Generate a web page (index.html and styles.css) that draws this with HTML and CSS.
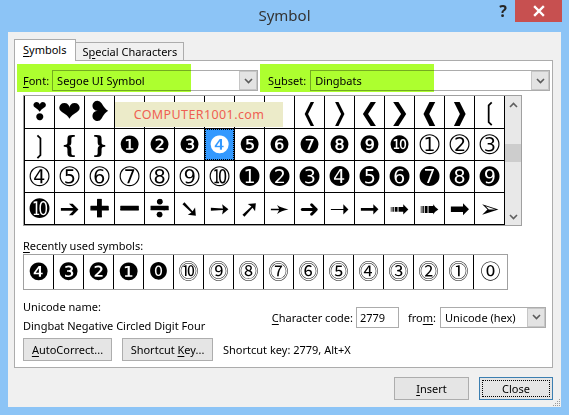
FILE: index.html
```html
<!DOCTYPE html>
<html>
<head>
<meta charset="utf-8">
<title>Symbol</title>
<link rel="stylesheet" href="styles.css">
</head>
<body>
<div class="window">
  <div class="titlebar">
    <div class="tb-left"></div>
    <div class="title">Symbol</div>
    <div class="controls">
      <span class="help">?</span>
      <span class="close"><svg width="12" height="12" viewBox="0 0 12 12"><path d="M2 2 L10 10 M10 2 L2 10" stroke="#fff" stroke-width="2.4" stroke-linecap="square"/></svg></span>
    </div>
  </div>
  <div class="client">
    <div class="tabs">
      <div class="tab active"><span><u>S</u>ymbols</span></div>
      <div class="tab"><span>S<u>p</u>ecial Characters</span></div>
    </div>
    <div class="panel">
      <div class="fontrow">
        <div class="field">
          <span class="lbl"><u>F</u>ont:</span>
          <div class="combo font-combo"><span class="val">Segoe UI Symbol</span><span class="drop"><svg width="9" height="6" viewBox="0 0 9 6"><path d="M1 1 L4.5 4.5 L8 1" fill="none" stroke="#5a5a5a" stroke-width="1.6"/></svg></span></div>
        </div>
        <div class="field subset-field">
          <span class="lbl">S<u>u</u>bset:</span>
          <div class="combo subset-combo"><span class="val">Dingbats</span><span class="drop"><svg width="9" height="6" viewBox="0 0 9 6"><path d="M1 1 L4.5 4.5 L8 1" fill="none" stroke="#5a5a5a" stroke-width="1.6"/></svg></span></div>
        </div>
        <div class="hl hl-font"></div>
        <div class="hl hl-subset"></div>
      </div>

      <div class="charmap">
        <div class="cells">
          <div class="c">❣</div><div class="c big">❤</div><div class="c big">❥</div><div class="c"></div><div class="c"></div><div class="c"></div><div class="c"></div><div class="c"></div><div class="c"></div><div class="c">❬</div><div class="c">❭</div><div class="c">❮</div><div class="c">❯</div><div class="c">❰</div><div class="c">❱</div><div class="c">❲</div>
          <div class="c">❳</div><div class="c">❴</div><div class="c">❵</div><div class="c">❶</div><div class="c">❷</div><div class="c">❸</div><div class="c sel">❹</div><div class="c">❺</div><div class="c">❻</div><div class="c">❼</div><div class="c">❽</div><div class="c">❾</div><div class="c">❿</div><div class="c">➀</div><div class="c">➁</div><div class="c">➂</div>
          <div class="c">➃</div><div class="c">➄</div><div class="c">➅</div><div class="c">➆</div><div class="c">➇</div><div class="c">➈</div><div class="c">➉</div><div class="c">➊</div><div class="c">➋</div><div class="c">➌</div><div class="c">➍</div><div class="c">➎</div><div class="c">➏</div><div class="c">➐</div><div class="c">➑</div><div class="c">➒</div>
          <div class="c">➓</div><div class="c">➔</div><div class="c"><span class="emo">➕</span></div><div class="c"><span class="emo">➖</span></div><div class="c"><span class="emo">➗</span></div><div class="c">➘</div><div class="c">➙</div><div class="c">➚</div><div class="c">➛</div><div class="c">➜</div><div class="c">➝</div><div class="c">➞</div><div class="c">➟</div><div class="c">➠</div><div class="c">➡</div><div class="c">➢</div>
        </div>
        <div class="vscroll">
          <svg class="arr" width="9" height="6" viewBox="0 0 9 6"><path d="M1 5 L4.5 1.5 L8 5" fill="none" stroke="#606060" stroke-width="1.6"/></svg>
          <div class="track"><div class="thumb"></div></div>
          <svg class="arr" width="9" height="6" viewBox="0 0 9 6"><path d="M1 1 L4.5 4.5 L8 1" fill="none" stroke="#606060" stroke-width="1.6"/></svg>
        </div>
        <div class="watermark">COMPUTER1001.com</div>
      </div>

      <div class="recent-label"><u>R</u>ecently used symbols:</div>
      <div class="recent">
        <div class="r neg">❹</div><div class="r neg">❸</div><div class="r neg">❷</div><div class="r neg">❶</div><div class="r zero">⓿</div><div class="r">⓾</div><div class="r">⓽</div><div class="r">⓼</div><div class="r">⓻</div><div class="r">⓺</div><div class="r">⓹</div><div class="r">⓸</div><div class="r">⓷</div><div class="r">⓶</div><div class="r">⓵</div><div class="r last">⓪</div>
      </div>

      <div class="info">
        <div class="names">
          <div class="line">Unicode name:</div>
          <div class="line">Dingbat Negative Circled Digit Four</div>
        </div>
        <div class="codegroup">
          <span class="lbl"><u>C</u>haracter code:</span>
          <div class="input">2779</div>
          <span class="lbl from">fro<u>m</u>:</span>
          <div class="combo from-combo"><span class="val">Unicode (hex)</span><span class="drop"><svg width="9" height="6" viewBox="0 0 9 6"><path d="M1 1 L4.5 4.5 L8 1" fill="none" stroke="#5a5a5a" stroke-width="1.6"/></svg></span></div>
        </div>
      </div>

      <div class="btnrow">
        <div class="btn autocorrect"><span><u>A</u>utoCorrect...</span></div>
        <div class="btn shortcut"><span>Shortcut <u>K</u>ey...</span></div>
        <span class="shortcut-text">Shortcut key: 2779, Alt+X</span>
      </div>
    </div>

    <div class="dlgbuttons">
      <div class="btn insert"><span><u>I</u>nsert</span></div>
      <div class="btn closebtn"><span class="focus">Close</span></div>
    </div>
  </div>
  <svg class="grip" width="9" height="9" viewBox="0 0 9 9"><g fill="#9a9a9a"><rect x="7" y="1" width="1" height="1"/><rect x="5" y="3" width="1" height="1"/><rect x="7" y="3" width="1" height="1"/><rect x="3" y="5" width="1" height="1"/><rect x="5" y="5" width="1" height="1"/><rect x="7" y="5" width="1" height="1"/><rect x="1" y="7" width="1" height="1"/><rect x="3" y="7" width="1" height="1"/><rect x="5" y="7" width="1" height="1"/><rect x="7" y="7" width="1" height="1"/></g></svg>
</div>
</body>
</html>
```

FILE: styles.css
```css
* { box-sizing: border-box; }
html, body { margin: 0; padding: 0; }
body {
  width: 569px;
  height: 415px;
  overflow: hidden;
  background: #8cc4f6;
  font-family: "Noto Sans", "DejaVu Sans", sans-serif;
  font-size: 11px;
  color: #000;
}
u { text-decoration: underline; text-underline-offset: 2px; }

.window {
  position: relative;
  width: 569px;
  height: 415px;
  display: flex;
  flex-direction: column;
  background: #8cc4f6;
}

/* Title bar */
.titlebar {
  height: 32px;
  flex: none;
  display: grid;
  grid-template-columns: 1fr auto 1fr;
}
.title {
  font-size: 15px;
  color: #333;
  padding-top: 5px;
}
.controls {
  display: flex;
  justify-content: flex-end;
  align-items: flex-start;
  padding-right: 7px;
}
.help {
  font-size: 16px;
  font-weight: bold;
  color: #262626;
  line-height: 20px;
  margin-right: 8px;
  margin-top: 1px;
}
.close {
  width: 47px;
  height: 22px;
  background: #c75050;
  display: flex;
  align-items: center;
  justify-content: center;
}

/* Client area */
.client {
  flex: 1;
  margin: 0 8px 8px 8px;
  background: #f0f0f0;
  padding: 7px 8px 0 6px;
  display: flex;
  flex-direction: column;
}

.tabs {
  display: flex;
  align-items: flex-end;
  margin-bottom: -1px;
  height: 22px;
}
.tab {
  height: 19px;
  padding: 0 6px;
  border: 1px solid #acacac;
  background: #f0f0f0;
  line-height: 17px;
  margin-left: -1px;
}
.tab.active {
  position: relative;
  z-index: 1;
  height: 22px;
  padding: 0 9px 0 8px;
  margin-left: 0;
  background: #fff;
  border-bottom: none;
  line-height: 19px;
}

.panel {
  border: 1px solid #acacac;
  background: #fff;
  padding: 9px 6px 6px 8px;
  display: flex;
  flex-direction: column;
}

/* Font / Subset row */
.fontrow {
  position: relative;
  height: 21px;
  display: flex;
  align-items: center;
}
.field {
  display: flex;
  align-items: center;
  gap: 3px;
}
.subset-field { margin-left: 10px; gap: 4px; }
.lbl { white-space: nowrap; }
.combo {
  height: 21px;
  border: 1px solid #acacac;
  background: #fff;
  display: flex;
  align-items: center;
  justify-content: space-between;
}
.combo .val { padding-left: 4px; white-space: nowrap; }
.combo .drop {
  width: 18px;
  height: 19px;
  background: #e3e3e3;
  border: 1px solid #c6c6c6;
  display: flex;
  align-items: center;
  justify-content: center;
}
.font-combo { width: 206px; }
.subset-combo { width: 240px; }

.hl {
  position: absolute;
  top: -6px;
  height: 28px;
  background: #adff2f;
  mix-blend-mode: multiply;
}
.hl-font { left: -6px; width: 174px; }
.hl-subset { left: 237px; width: 174px; }

/* Character map */
.charmap {
  position: relative;
  margin-top: 4px;
  width: 499px;
  display: flex;
  border: 1px solid #a0a0a0;
}
.cells {
  display: grid;
  grid-template-columns: repeat(16, 29px);
  grid-template-rows: 32px 31px 31px 31px;
  gap: 1px;
  padding: 0 1px 1px 1px;
  background: #000;
}
.c {
  background: #fff;
  display: flex;
  align-items: center;
  justify-content: center;
  font-family: "DejaVu Sans", "Noto Sans CJK SC", sans-serif;
  font-size: 24px;
  line-height: 1;
  color: #000;
  overflow: hidden;
}
.c.big { font-size: 28px; }
.emo {
  font-size: 17px;
  line-height: 1;
  filter: grayscale(1) brightness(0);
}
.c.sel {
  background: #3399ff;
  color: #fff;
  outline: 1px dotted #000;
  outline-offset: -1px;
}
.vscroll {
  flex: 1;
  background: #e8e8e8;
  display: flex;
  flex-direction: column;
  align-items: center;
  padding: 6px 0 5px;
}
.vscroll .track {
  flex: 1;
  width: 100%;
  position: relative;
}
.vscroll .thumb {
  position: absolute;
  left: 0;
  right: 0;
  top: 36px;
  height: 18px;
  background: #cdcdcd;
}
.watermark {
  position: absolute;
  left: 91px;
  top: 6px;
  width: 168px;
  height: 25px;
  background: #ecebc9;
  color: #ef5f52;
  font-family: "Noto Sans", sans-serif;
  font-size: 12.5px;
  letter-spacing: 0.4px;
  display: flex;
  align-items: center;
  justify-content: center;
}

/* Recently used */
.recent-label {
  margin-top: 12px;
  line-height: 16px;
  height: 16px;
}
.recent {
  width: 485px;
  height: 36px;
  display: flex;
  border: 1px solid #a0a0a0;
  background: #fff;
}
.r {
  width: 30px;
  border-left: 1px solid #000;
  display: flex;
  align-items: center;
  justify-content: center;
  font-family: "DejaVu Sans", "Noto Sans CJK SC", sans-serif;
  font-size: 20px;
  line-height: 1;
  overflow: hidden;
}
.r.neg { font-size: 24px; }
.r.zero { font-size: 18px; }
.r:first-child { width: 29px; border-left: none; }
.r.last { flex: 1; }

/* Info */
.info {
  margin-top: 9px;
  display: flex;
  justify-content: space-between;
  align-items: center;
}
.names { display: flex; flex-direction: column; gap: 4px; }
.names .line { line-height: 15px; height: 15px; }
.codegroup {
  display: flex;
  align-items: center;
  margin-top: 2px;
}
.input {
  width: 43px;
  height: 21px;
  border: 1px solid #acacac;
  background: #fff;
  margin-left: 3px;
  padding-left: 3px;
  line-height: 19px;
}
.from { margin-left: 9px; margin-right: 4px; }
.from-combo { width: 106px; }

/* Buttons */
.btnrow {
  margin-top: 5px;
  display: flex;
  align-items: center;
}
.btn {
  height: 23px;
  border: 1px solid #adadad;
  background: #e5e5e5;
  display: flex;
  align-items: center;
  justify-content: center;
}
.autocorrect { width: 89px; }
.shortcut { width: 91px; margin-left: 10px; }
.shortcut-text { margin-left: 10px; }

.dlgbuttons {
  margin-top: 9px;
  display: flex;
  justify-content: flex-end;
  gap: 10px;
}
.insert { width: 75px; }
.closebtn {
  width: 74px;
  border-color: #3c7fb1;
  padding: 2px;
}
.closebtn .focus {
  width: 100%;
  height: 100%;
  border: 1px dotted #000;
  display: flex;
  align-items: center;
  justify-content: center;
}

.grip {
  position: absolute;
  right: 8px;
  bottom: 8px;
}
```
